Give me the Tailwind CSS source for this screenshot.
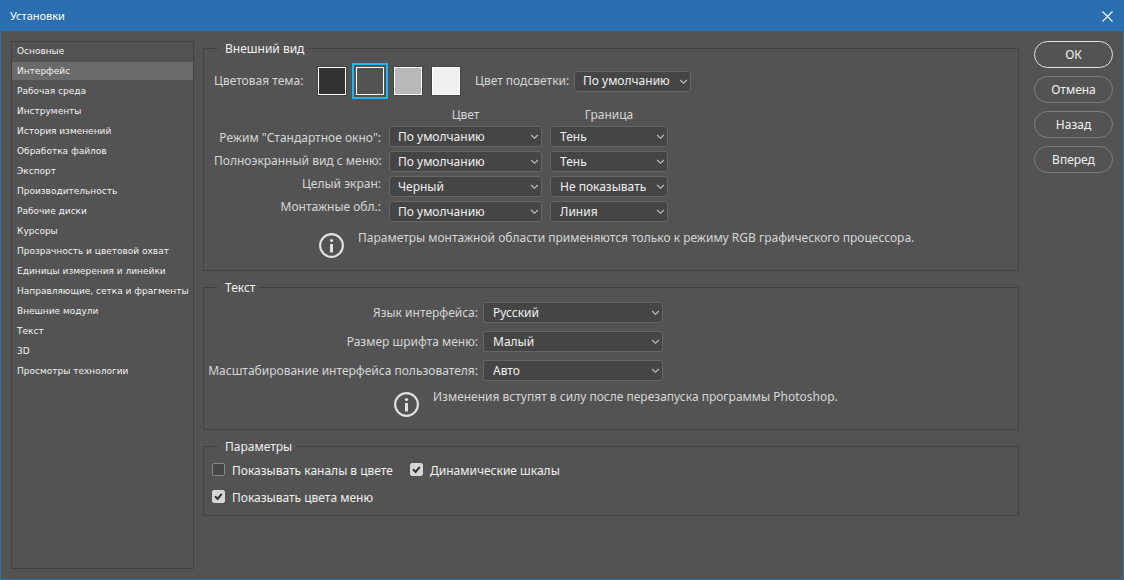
<!DOCTYPE html>
<html lang="ru">
<head>
<meta charset="utf-8">
<meta name="viewport" content="width=device-width, initial-scale=1">
<title>Установки</title>
<script src="https://cdn.jsdelivr.net/npm/@tailwindcss/browser@4"></script>
</head>
<body class="flex min-h-screen flex-col border border-[#2a6fb0] bg-[#535353] font-['Noto_Sans','Open_Sans',sans-serif] text-xs leading-4 text-[#d6d6d6]">
<svg class="hidden" aria-hidden="true">
  <symbol id="chevron" viewBox="0 0 9 6"><path d="M1.2 1l3.3 3.3L7.8 1" fill="none" stroke="#c8c8c8" stroke-width="1.1"/></symbol>
  <symbol id="info" viewBox="0 0 26 26"><circle cx="12.5" cy="13.5" r="11.4" fill="none" stroke="currentColor" stroke-width="2.1"/><circle cx="12.5" cy="8.5" r="1.6" fill="currentColor"/><path d="M11 12h3v8.500h-3z" fill="currentColor"/></symbol>
</svg>

<header class="flex h-[30px] items-center justify-between bg-[#2a6fb0] pr-[10px] pl-[9px] text-white">
  <h1 class="text-[11px]">Установки</h1>
  <button type="button" aria-label="Закрыть" class="size-[11px]"><svg viewBox="0 0 11 11" class="size-[11px]"><path d="M.5.5l10 10M10.5.5l-10 10" fill="none" stroke="currentColor" stroke-width="1.1"/></svg></button>
</header>

<div class="flex flex-1 px-[10px] pb-[10px]">
  <nav class="mt-[10px] flex w-[183px] shrink-0 flex-col gap-[2px] border border-[#434343] font-['DejaVu_Sans','Noto_Sans',sans-serif] text-[9px] leading-[18px] text-[#f2f2f2]">
    <a href="#" class="pl-[5px]">Основные</a>
    <a href="#" aria-current="page" class="bg-[#6a6a6a] pl-[5px]">Интерфейс</a>
    <a href="#" class="pl-[5px]">Рабочая среда</a>
    <a href="#" class="pl-[5px]">Инструменты</a>
    <a href="#" class="pl-[5px]">История изменений</a>
    <a href="#" class="pl-[5px]">Обработка файлов</a>
    <a href="#" class="pl-[5px]">Экспорт</a>
    <a href="#" class="pl-[5px]">Производительность</a>
    <a href="#" class="pl-[5px]">Рабочие диски</a>
    <a href="#" class="pl-[5px]">Курсоры</a>
    <a href="#" class="pl-[5px]">Прозрачность и цветовой охват</a>
    <a href="#" class="pl-[5px]">Единицы измерения и линейки</a>
    <a href="#" class="pl-[5px] whitespace-nowrap">Направляющие, сетка и фрагменты</a>
    <a href="#" class="pl-[5px]">Внешние модули</a>
    <a href="#" class="pl-[5px]">Текст</a>
    <a href="#" class="pl-[5px]">3D</a>
    <a href="#" class="pl-[5px]">Просмотры технологии</a>
  </nav>

  <main class="ml-[9px] flex min-w-0 flex-1 flex-col gap-2 pt-[9px] whitespace-nowrap">
    <fieldset class="border border-[#434343] px-[10px] pb-[12px]">
      <legend class="ml-1 h-4 pr-1 pl-[7px] leading-[18px] text-[#f0f0f0]">Внешний вид</legend>
      <div class="flex items-center pt-[11px]">
        <span class="w-[104px]" id="theme">Цветовая тема:</span>
        <div class="flex gap-[10px]" role="radiogroup" aria-labelledby="theme">
          <input type="radio" name="theme" aria-label="Темная" class="size-7 appearance-none border border-white bg-[#323232] outline outline-[#434343] checked:outline-2 checked:outline-offset-2 checked:outline-[#1fb6f5]">
          <input type="radio" name="theme" aria-label="Темно-серая" checked class="size-7 appearance-none border border-white bg-[#535353] outline outline-[#434343] checked:outline-2 checked:outline-offset-2 checked:outline-[#1fb6f5]">
          <input type="radio" name="theme" aria-label="Серая" class="size-7 appearance-none border border-white bg-[#b8b8b8] outline outline-[#434343] checked:outline-2 checked:outline-offset-2 checked:outline-[#1fb6f5]">
          <input type="radio" name="theme" aria-label="Светлая" class="size-7 appearance-none border border-white bg-[#f0f0f0] outline outline-[#434343] checked:outline-2 checked:outline-offset-2 checked:outline-[#1fb6f5]">
        </div>
        <label for="hl" class="ml-[15px] w-[99px]">Цвет подсветки:</label>
        <div class="relative w-[117px]">
          <select id="hl" class="block h-[21px] w-full appearance-none rounded-[3px] border border-[#666] bg-[#454545] pl-2 text-[#f0f0f0]"><option>По умолчанию</option></select>
          <svg class="pointer-events-none absolute top-2 right-[3px] h-[6px] w-[9px]"><use href="#chevron"/></svg>
        </div>
      </div>

      <div class="mt-3 flex gap-2">
        <div class="flex w-[167px] flex-col pt-[19px] text-right leading-[23px]">
          <label for="c1">Режим "Стандартное окно":</label>
          <label for="c2">Полноэкранный вид с меню:</label>
          <label for="c3">Целый экран:</label>
          <label for="c4">Монтажные обл.:</label>
        </div>
        <div class="flex w-[153px] flex-col gap-1">
          <span class="-mb-px text-center">Цвет</span>
          <div class="relative"><select id="c1" class="block h-[21px] w-full appearance-none rounded-[3px] border border-[#666] bg-[#454545] pl-2 text-[#f0f0f0]"><option>По умолчанию</option></select><svg class="pointer-events-none absolute top-2 right-[3px] h-[6px] w-[9px]"><use href="#chevron"/></svg></div>
          <div class="relative"><select id="c2" class="block h-[21px] w-full appearance-none rounded-[3px] border border-[#666] bg-[#454545] pl-2 text-[#f0f0f0]"><option>По умолчанию</option></select><svg class="pointer-events-none absolute top-2 right-[3px] h-[6px] w-[9px]"><use href="#chevron"/></svg></div>
          <div class="relative"><select id="c3" class="block h-[21px] w-full appearance-none rounded-[3px] border border-[#666] bg-[#454545] pl-2 text-[#f0f0f0]"><option>Черный</option></select><svg class="pointer-events-none absolute top-2 right-[3px] h-[6px] w-[9px]"><use href="#chevron"/></svg></div>
          <div class="relative"><select id="c4" class="block h-[21px] w-full appearance-none rounded-[3px] border border-[#666] bg-[#454545] pl-2 text-[#f0f0f0]"><option>По умолчанию</option></select><svg class="pointer-events-none absolute top-2 right-[3px] h-[6px] w-[9px]"><use href="#chevron"/></svg></div>
        </div>
        <div class="flex w-[118px] flex-col gap-1">
          <span class="-mb-px text-center">Граница</span>
          <div class="relative"><select aria-label="Граница: стандартное окно" class="block h-[21px] w-full appearance-none rounded-[3px] border border-[#666] bg-[#454545] pl-[9px] text-[#f0f0f0]"><option>Тень</option></select><svg class="pointer-events-none absolute top-2 right-[3px] h-[6px] w-[9px]"><use href="#chevron"/></svg></div>
          <div class="relative"><select aria-label="Граница: полноэкранный вид" class="block h-[21px] w-full appearance-none rounded-[3px] border border-[#666] bg-[#454545] pl-[9px] text-[#f0f0f0]"><option>Тень</option></select><svg class="pointer-events-none absolute top-2 right-[3px] h-[6px] w-[9px]"><use href="#chevron"/></svg></div>
          <div class="relative"><select aria-label="Граница: целый экран" class="block h-[21px] w-full appearance-none rounded-[3px] border border-[#666] bg-[#454545] pl-[9px] text-[#f0f0f0]"><option>Не показывать</option></select><svg class="pointer-events-none absolute top-2 right-[3px] h-[6px] w-[9px]"><use href="#chevron"/></svg></div>
          <div class="relative"><select aria-label="Граница: монтажные области" class="block h-[21px] w-full appearance-none rounded-[3px] border border-[#666] bg-[#454545] pl-[9px] text-[#f0f0f0]"><option>Линия</option></select><svg class="pointer-events-none absolute top-2 right-[3px] h-[6px] w-[9px]"><use href="#chevron"/></svg></div>
        </div>
      </div>

      <div class="mt-[10px] ml-[105px] flex gap-[13px]">
        <svg class="size-[26px] shrink-0 text-[#e2e2e2]"><use href="#info"/></svg>
        <p class="-mt-[2px]">Параметры монтажной области применяются только к режиму RGB графического процессора.</p>
      </div>
    </fieldset>

    <fieldset class="border border-[#434343] px-[8px] pb-[12px]">
      <legend class="ml-[6px] h-4 pr-1 pl-[7px] leading-[18px] text-[#f0f0f0]">Текст</legend>
      <div class="flex gap-[5px] pt-[7px]">
        <div class="flex w-[266px] flex-col items-end gap-2 leading-[21px]">
          <label for="lang">Язык интерфейса:</label>
          <label for="size">Размер шрифта меню:</label>
          <label for="scale">Масштабирование интерфейса пользователя:</label>
        </div>
        <div class="flex w-[180px] flex-col gap-2">
          <div class="relative"><select id="lang" class="block h-[21px] w-full appearance-none rounded-[3px] border border-[#666] bg-[#454545] pl-[9px] text-[#f0f0f0]"><option>Русский</option></select><svg class="pointer-events-none absolute top-2 right-[3px] h-[6px] w-[9px]"><use href="#chevron"/></svg></div>
          <div class="relative"><select id="size" class="block h-[21px] w-full appearance-none rounded-[3px] border border-[#666] bg-[#454545] pl-[9px] text-[#f0f0f0]"><option>Малый</option></select><svg class="pointer-events-none absolute top-2 right-[3px] h-[6px] w-[9px]"><use href="#chevron"/></svg></div>
          <div class="relative"><select id="scale" class="block h-[21px] w-full appearance-none rounded-[3px] border border-[#666] bg-[#454545] pl-[9px] text-[#f0f0f0]"><option>Авто</option></select><svg class="pointer-events-none absolute top-2 right-[3px] h-[6px] w-[9px]"><use href="#chevron"/></svg></div>
        </div>
      </div>
      <div class="mt-[10px] ml-[182px] flex gap-[13px]">
        <svg class="size-[26px] shrink-0 text-[#e2e2e2]"><use href="#info"/></svg>
        <p class="-mt-[2px]">Изменения вступят в силу после перезапуска программы Photoshop.</p>
      </div>
    </fieldset>

    <fieldset class="border border-[#434343] px-[8px] pb-[9px] text-[#f0f0f0]">
      <legend class="ml-[6px] h-4 pr-1 pl-[7px] leading-[18px]">Параметры</legend>
      <div class="grid grid-cols-[198px_1fr] gap-y-[11px] pt-[9px]">
        <label class="flex items-start gap-[7px]"><span class="relative flex"><input type="checkbox" class="peer size-[13px] appearance-none rounded-[2px] border border-[#888] bg-[#454545] checked:border-[#d6d6d6] checked:bg-[#d6d6d6]"><svg viewBox="0 0 13 13" class="pointer-events-none absolute size-[13px] opacity-0 peer-checked:opacity-100"><path d="M3 6.2l2.6 2.7L9.8 3.8" fill="none" stroke="#333" stroke-width="2"/></svg></span>Показывать каналы в цвете</label>
        <label class="flex items-start gap-[7px]"><span class="relative flex"><input type="checkbox" checked class="peer size-[13px] appearance-none rounded-[2px] border border-[#888] bg-[#454545] checked:border-[#d6d6d6] checked:bg-[#d6d6d6]"><svg viewBox="0 0 13 13" class="pointer-events-none absolute size-[13px] opacity-0 peer-checked:opacity-100"><path d="M3 6.2l2.6 2.7L9.8 3.8" fill="none" stroke="#333" stroke-width="2"/></svg></span>Динамические шкалы</label>
        <label class="flex items-start gap-[7px]"><span class="relative flex"><input type="checkbox" checked class="peer size-[13px] appearance-none rounded-[2px] border border-[#888] bg-[#454545] checked:border-[#d6d6d6] checked:bg-[#d6d6d6]"><svg viewBox="0 0 13 13" class="pointer-events-none absolute size-[13px] opacity-0 peer-checked:opacity-100"><path d="M3 6.2l2.6 2.7L9.8 3.8" fill="none" stroke="#333" stroke-width="2"/></svg></span>Показывать цвета меню</label>
      </div>
    </fieldset>
  </main>

  <div class="mt-[10px] ml-[15px] flex w-[79px] shrink-0 flex-col gap-2 text-[#f0f0f0]">
    <button type="button" class="h-[27px] rounded-full border border-[#e4e4e4]">ОК</button>
    <button type="button" class="h-[27px] rounded-full border border-[#808080]">Отмена</button>
    <button type="button" class="h-[27px] rounded-full border border-[#808080]">Назад</button>
    <button type="button" class="h-[27px] rounded-full border border-[#808080]">Вперед</button>
  </div>
</div>
</body>
</html>
